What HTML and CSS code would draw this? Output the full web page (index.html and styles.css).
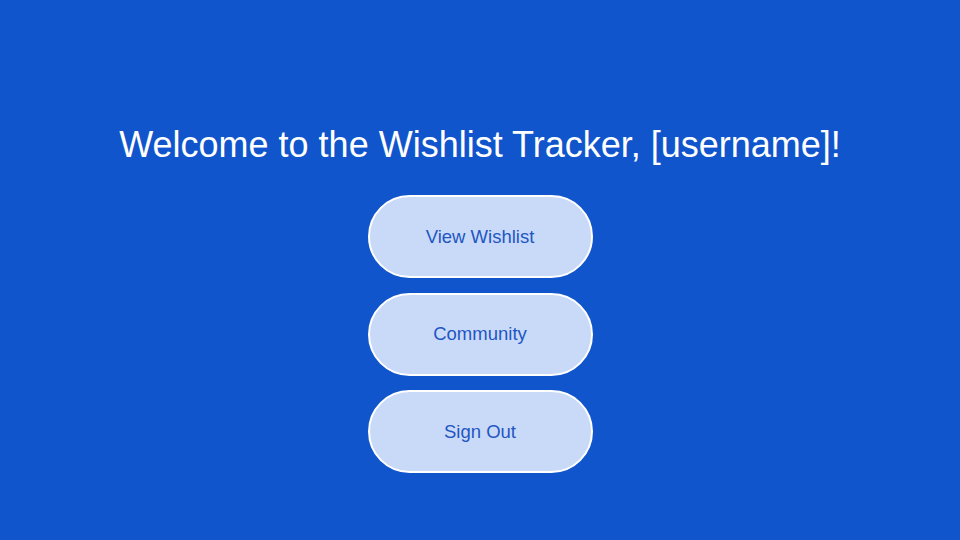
FILE: index.html
```html
<!DOCTYPE html>
<html>
<head>
<meta charset="utf-8">
<link rel="stylesheet" href="styles.css">
</head>
<body>
<main class="page">
  <h1 class="title">Welcome to the Wishlist Tracker, [username]!</h1>
  <nav class="menu">
    <button class="btn">View Wishlist</button>
    <button class="btn">Community</button>
    <button class="btn">Sign Out</button>
  </nav>
</main>
</body>
</html>
```
FILE: styles.css
```css
html, body {
  margin: 0;
  padding: 0;
  width: 960px;
  height: 540px;
  background: #1155cc;
  font-family: "Liberation Sans", Arial, sans-serif;
}
.page {
  display: flex;
  flex-direction: column;
  align-items: center;
  padding-top: 121px;
}
.title {
  margin: 0;
  color: #ffffff;
  font-weight: 400;
  font-size: 36px;
  line-height: 48px;
}
.menu {
  display: flex;
  flex-direction: column;
  gap: 14.5px;
  margin-top: 26px;
}
.btn {
  width: 225px;
  height: 83px;
  border: 2px solid #ffffff;
  border-radius: 42px;
  background: #c9daf8;
  color: #1f56c2;
  font-family: "Liberation Sans", Arial, sans-serif;
  font-size: 18.5px;
  padding: 0;
}
```
